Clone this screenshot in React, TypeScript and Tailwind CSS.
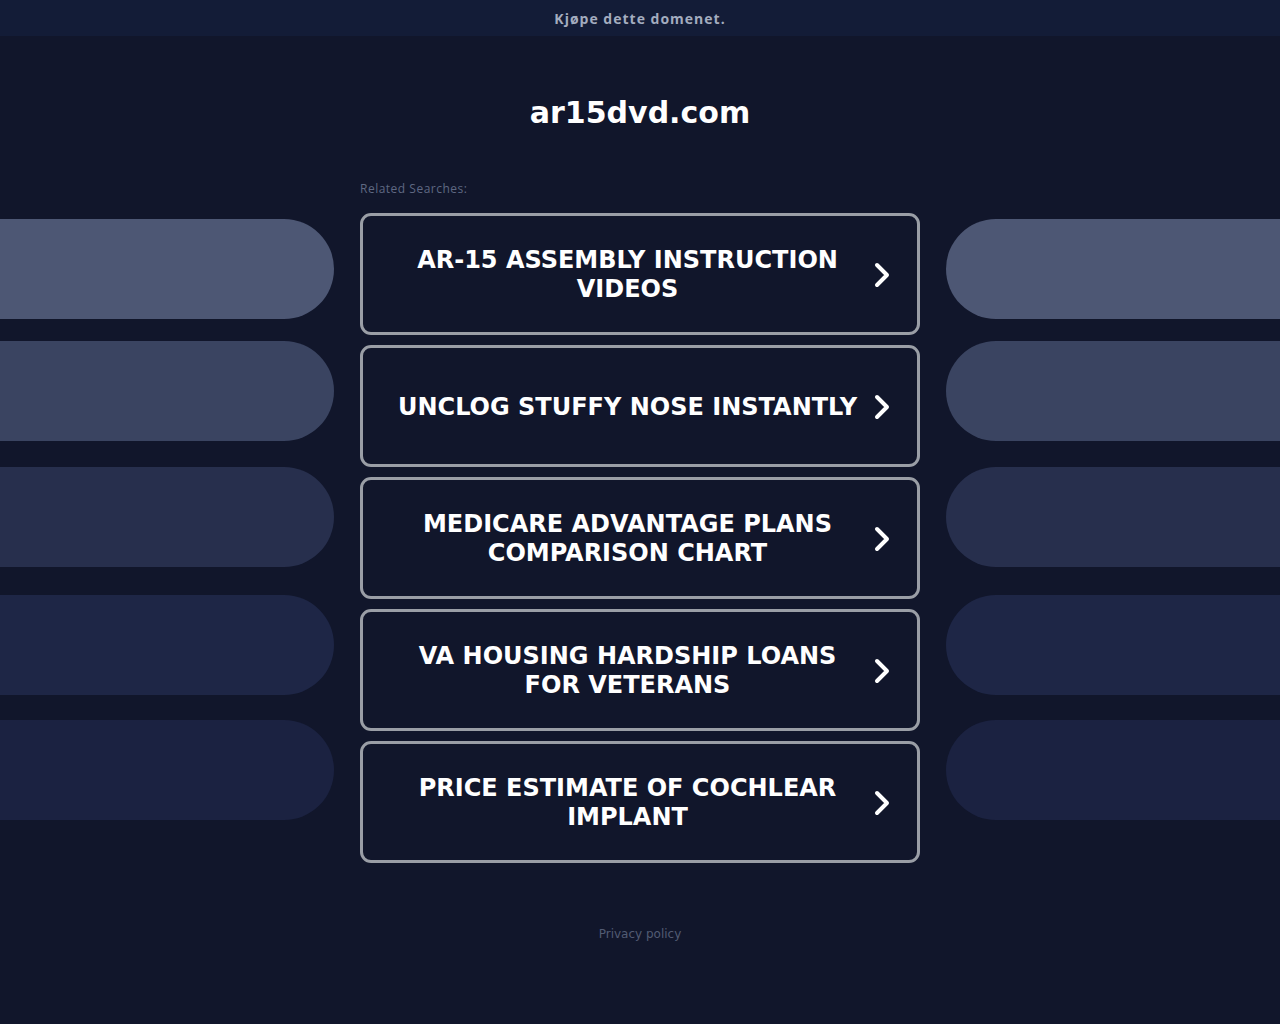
const searches = [
  "AR-15 ASSEMBLY INSTRUCTION VIDEOS",
  "UNCLOG STUFFY NOSE INSTANTLY",
  "MEDICARE ADVANTAGE PLANS COMPARISON CHART",
  "VA HOUSING HARDSHIP LOANS FOR VETERANS",
  "PRICE ESTIMATE OF COCHLEAR IMPLANT",
];

// decorative side pills, each with its own offset from the one above
const pills = [
  "bg-[#4d5774]",
  "bg-[#3a4461] mt-[22px]",
  "bg-[#272f4d] mt-[26px]",
  "bg-[#1e2646] mt-[28px]",
  "bg-[#1b2241] mt-[25px]",
];

function Chevron() {
  return (
    <svg width="18" height="28" viewBox="0 0 18 28" className="shrink-0">
      <path d="M4 4 L14 14 L4 24" fill="none" stroke="white" strokeWidth="4" strokeLinecap="round" strokeLinejoin="round"/>
    </svg>
  );
}

function SideColumn({side}: { side: "left" | "right" }) {
  return (
    <div className="flex flex-col pt-[219px]">
      {pills.map((c) => (
        <div
          key={c}
          className={`h-[100px] ${c} ${side === "left" ? "rounded-r-[50px]" : "rounded-l-[50px]"}`}
        />
      ))}
    </div>
  );
}

export default function App() {
  return (
    <div className="min-h-[1024px] bg-[#11162b] font-['DejaVu_Sans',sans-serif]">
      <div className="h-[36px] bg-[#131c37] flex items-center justify-center">
        <a className="text-[14px] font-bold text-[#a3acbf] tracking-[1px] font-['Open_Sans',sans-serif]">Kjøpe dette domenet.</a>
      </div>
      <div className="relative">
        <h1 className="absolute inset-x-0 top-[58px] text-center text-[30px] font-bold text-white leading-[38px]">
          ar15dvd.com
        </h1>
      </div>
      <div className="grid grid-cols-[334px_560px_334px] gap-x-[26px] -mt-[36px]">
        <SideColumn side="left"/>
        <div className="pt-[181px]">
          <div className="text-[12px] text-[#5f6882] tracking-[0.5px] font-['Open_Sans',sans-serif] leading-[16px] h-[32px]">Related Searches:</div>
          <div className="flex flex-col gap-[10px]">
            {searches.map((s) => (
              <a
                key={s}
                className="h-[122px] border-[3px] border-[#9a9ea6] rounded-[11px] flex items-center pl-[30px] pr-[26px] pt-[2px]"
              >
                <span className="w-[470px] text-center text-[24px] font-bold text-white leading-[29px]">
                  {s}
                </span>
                <span className="ml-[11px]">
                  <Chevron/>
                </span>
              </a>
            ))}
          </div>
        </div>
        <SideColumn side="right"/>
      </div>
      <div className="text-center text-[12px] text-[#525b73] mt-[62px]">Privacy policy</div>
    </div>
  );
}
